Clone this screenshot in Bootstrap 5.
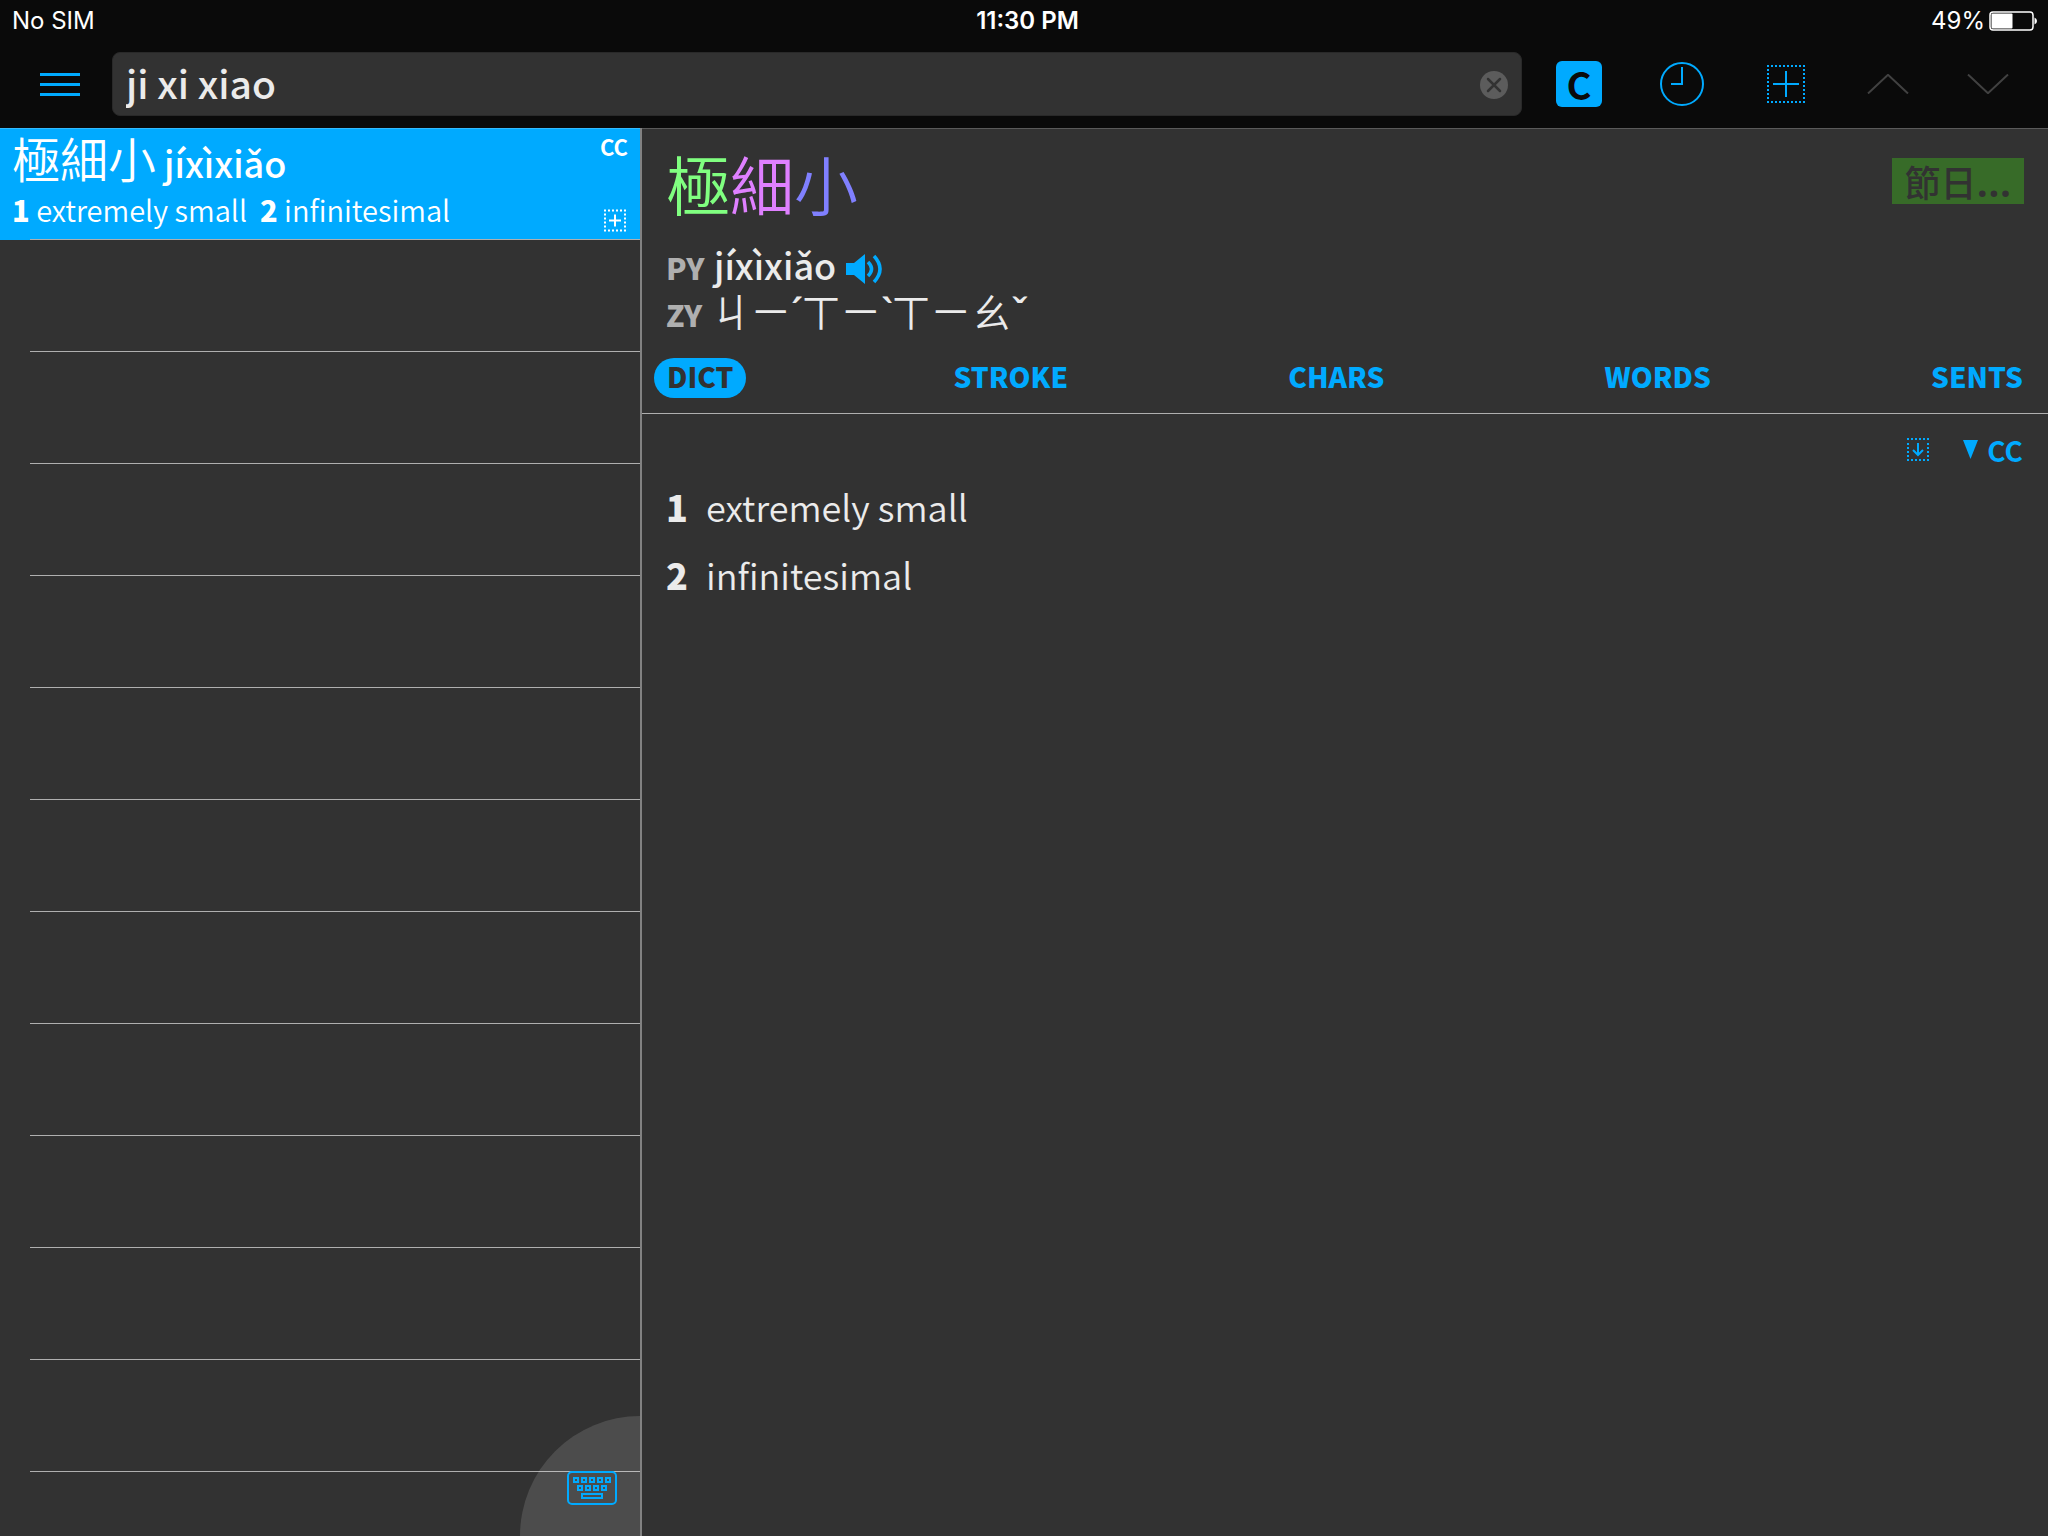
<!DOCTYPE html>
<html lang="zh-Hant">
<head>
<meta charset="utf-8">
<meta name="viewport" content="width=device-width, initial-scale=1">
<title>Dictionary</title>
<link href="https://cdn.jsdelivr.net/npm/bootstrap@5.3.0/dist/css/bootstrap.min.css" rel="stylesheet">
<style>
:root { --accent: #00aaff; --panel: #323232; --bar: #0a0a0a; --rule: #afafaf; --ink: #ebebeb; }
body { background: var(--panel); color: var(--ink); font-family: "Noto Sans CJK TC", "Noto Sans", sans-serif; }
svg { display: block; flex: none; }
button { background: none; border: 0; padding: 0; color: var(--accent); }
.topbar { background: var(--bar); }
.statusbar { height: 40px; padding: 0 11px 0 12px; color: #fff; font: 400 24px/42px Inter, sans-serif; }
.statusbar .clock { font-weight: 600; padding-left: 6px; }
.toolbar { height: 88px; padding: 0 38px 0 40px; }
.search { height: 64px; margin: 0 34px 0 32px; }
.search .form-control { height: 64px; padding: 0 64px 4px 13px; background: var(--panel); border: 1px solid #292929; border-radius: 8px; color: var(--ink); font-size: 39px; font-weight: 500; line-height: 58px; }
.clear-btn { right: 14px; top: 19px; }
.tools { gap: 56px; }
.c-btn { width: 46px; height: 46px; border-radius: 6px; background: var(--accent); color: var(--bar); font-size: 38px; line-height: 40px; font-weight: 700; }
.work { min-height: 0; }
.results { width: 642px; border-right: 2px solid #828282; }
.result { height: 112px; padding: 0; background: none; border: 0; color: inherit; }
.result::after { content: ""; position: absolute; left: 30px; right: 0; bottom: 0; border-bottom: 1px solid var(--rule); }
.result.picked { background: var(--accent); color: #fff; padding: 1px 12px 0; box-shadow: inset 0 1px #33bbff; }
.head-line { height: 56px; font-size: 48px; line-height: 56px; font-weight: 350; }
.head-line span { font-size: 36px; line-height: 1; font-weight: 500; }
.def-line { height: 48px; font-size: 29px; line-height: 48px; font-weight: 350; }
.def-line b, .senses b { font-weight: 900; }
.src { font-size: 22px; line-height: 34px; font-weight: 700; }
.kbd-btn { right: 0; bottom: 0; width: 120px; height: 120px; border-radius: 120px 0 0 0; background: rgba(255,255,255,.13); padding: 0 23px 31px 0; }
.entry { border-top: 1px solid #5a5a5a; }
.headword { font-size: 64px; line-height: 80px; padding-top: 13px; font-weight: 350; }
.t2 { color: #80ff80; } .t4 { color: #df80ff; } .t3 { color: #8080ff; }
.tag { width: 132px; height: 46px; margin-top: 29px; background: #376b28; color: var(--panel); font-size: 36px; line-height: 42px; font-weight: 500; }
.tag span, .zhuyin i { font-family: "Noto Sans", sans-serif; }
.tag span { font-size: 42px; line-height: 1; font-weight: 600; }
.readings { padding-top: 18px; }
.reading { height: 49px; line-height: 48px; font-size: 36px; font-weight: 500; }
.reading + .reading { height: 50px; line-height: 50px; }
.reading .kind { width: 45px; color: #afafaf; font-size: 30px; font-weight: 900; }
.pinyin { padding-left: 3px; }
.zhuyin { font-size: 40px; font-weight: 350; line-height: 1; }
.zhuyin i { display: inline-block; width: 10px; font-style: normal; font-weight: 500; }
.tabs { padding: 19px 12px 15px; border-bottom: 1px solid var(--rule); }
.tabs .nav-link { padding: 0 13px; height: 40px; border-radius: 20px; font-size: 28px; line-height: 37px; font-weight: 800; color: var(--accent); }
.tabs .nav-link.active { background: var(--accent); color: var(--panel); }
.pick { height: 58px; padding: 13px 25px 0 0; }
.pick button { font-size: 28px; font-weight: 700; line-height: 40px; }
.senses { padding: 0 24px; font-size: 36px; line-height: 68px; font-weight: 350; }
.senses b { width: 40px; }
</style>
<script src="https://cdn.jsdelivr.net/npm/bootstrap@5.3.0/dist/js/bootstrap.bundle.min.js"></script>
</head>
<body class="vh-100 overflow-hidden d-flex flex-column">
<header class="topbar">
  <div class="statusbar row g-0">
    <div class="col">No SIM</div>
    <div class="col text-center clock">11:30 PM</div>
    <div class="col d-flex justify-content-end align-items-center gap-1">49%
      <svg width="48" height="20" viewBox="0 0 48 20"><rect x="1" y="1" width="43" height="18" rx="3" fill="none" stroke="#fff" stroke-width="1.5"/><rect x="2.500" y="2.500" width="21" height="15" rx="1" fill="#fff"/><path d="M45.500 6.500q2.500 1 2.500 3.500t-2.500 3.500z" fill="#fff"/></svg>
    </div>
  </div>
  <div class="toolbar d-flex align-items-center">
    <button type="button" aria-label="Menu"><svg width="40" height="24" viewBox="0 0 40 24"><path d="M0 2.500h40M0 12.500h40M0 22.500h40" stroke="#00aaff" stroke-width="3"/></svg></button>
    <div class="search position-relative flex-grow-1">
      <input class="form-control" type="text" aria-label="Search" value="ji xi xiao">
      <button type="button" class="clear-btn position-absolute" aria-label="Clear"><svg width="28" height="28" viewBox="0 0 28 28"><circle cx="14" cy="14" r="14" fill="#5c5c5c"/><path d="M8 8l12 12M20 8L8 20" stroke="#323232" stroke-width="2.500" stroke-linecap="round"/></svg></button>
    </div>
    <div class="d-flex align-items-center tools">
      <button type="button" class="c-btn">C</button>
      <button type="button" aria-label="History"><svg width="48" height="46" viewBox="0 0 48 46"><circle cx="24" cy="23" r="21" fill="none" stroke="#00aaff" stroke-width="2"/><path d="M24 6v17H13" fill="none" stroke="#00aaff" stroke-width="2"/></svg></button>
      <button type="button" aria-label="Add"><svg width="48" height="38" viewBox="0 0 48 38"><path d="M5 1h38M5 37h38M6 4v30M42 4v30" fill="none" stroke="#00aaff" stroke-width="2" stroke-dasharray="2 2"/><path d="M24 6v26M11 19h26" stroke="#00aaff" stroke-width="2"/></svg></button>
      <button type="button" aria-label="Previous"><svg width="44" height="20" viewBox="0 0 44 20"><path d="M2 19.500L22 .8l20 18.700" fill="none" stroke="#414141" stroke-width="2"/></svg></button>
      <button type="button" aria-label="Next"><svg width="44" height="20" viewBox="0 0 44 20"><path d="M2 .5l20 18.700L42 .5" fill="none" stroke="#414141" stroke-width="2"/></svg></button>
    </div>
  </div>
</header>
<main class="work d-flex flex-grow-1">
  <aside class="results position-relative flex-shrink-0">
    <ul class="list-group list-group-flush rounded-0">
      <li class="list-group-item result picked d-flex justify-content-between">
        <div>
          <div class="head-line">極細小<span> jíxìxiǎo</span></div>
          <div class="def-line"><b>1</b> extremely small&nbsp; <b>2</b> infinitesimal</div>
        </div>
        <div class="d-flex flex-column justify-content-between align-items-end pb-2">
          <span class="src">CC</span>
          <svg width="24" height="23" viewBox="0 0 24 23"><path d="M0 1.500h22M0 21.500h22M1 4.500v15M21 4.500v15" stroke="#fff" stroke-width="2" stroke-dasharray="2 2" fill="none"/><path d="M11 5.500v12M5 11.500h12" stroke="#fff" stroke-width="2"/></svg>
        </div>
      </li>
      <li class="list-group-item result"></li><li class="list-group-item result"></li><li class="list-group-item result"></li>
      <li class="list-group-item result"></li><li class="list-group-item result"></li><li class="list-group-item result"></li>
      <li class="list-group-item result"></li><li class="list-group-item result"></li><li class="list-group-item result"></li>
      <li class="list-group-item result"></li><li class="list-group-item result"></li><li class="list-group-item result"></li>
    </ul>
    <button type="button" class="kbd-btn position-absolute d-flex justify-content-end align-items-end" aria-label="Keyboard">
      <svg width="50" height="34" viewBox="0 0 50 34" fill="none" stroke="#00aaff" stroke-width="2"><rect x="1" y="1" width="48" height="32" rx="4"/><path d="M7 7h4v4H7zM15 7h4v4h-4zM23 7h4v4h-4zM31 7h4v4h-4zM39 7h4v4h-4zM11 15h4v4h-4zM19 15h4v4h-4zM27 15h4v4h-4zM35 15h4v4h-4zM15 23h20v4H15z"/></svg>
    </button>
  </aside>
  <section class="entry flex-grow-1">
    <div class="d-flex justify-content-between align-items-start ps-4 pe-4">
      <div class="headword"><span class="t2">極</span><span class="t4">細</span><span class="t3">小</span></div>
      <button type="button" class="tag">節日<span>…</span></button>
    </div>
    <div class="readings ps-4">
      <div class="reading d-flex align-items-baseline"><span class="kind">PY</span><span class="pinyin">jíxìxiǎo</span>
        <button type="button" class="ms-2 pb-1 align-self-end" aria-label="Play"><svg width="38" height="31" viewBox="0 0 38 31"><path d="M2 9h8L21 0v30L10 21H2z" fill="#00aaff"/><path d="M24 8q7 7 0 14M30 2q12 13 0 26" fill="none" stroke="#00aaff" stroke-width="3.500"/></svg></button>
      </div>
      <div class="reading d-flex align-items-baseline"><span class="kind">ZY</span><span class="zhuyin">ㄐㄧ<i>ˊ</i>ㄒㄧ<i>ˋ</i>ㄒㄧㄠ<i>ˇ</i></span></div>
    </div>
    <ul class="nav tabs justify-content-between">
      <li class="nav-item"><a class="nav-link active" href="#">DICT</a></li>
      <li class="nav-item"><a class="nav-link" href="#">STROKE</a></li>
      <li class="nav-item"><a class="nav-link" href="#">CHARS</a></li>
      <li class="nav-item"><a class="nav-link" href="#">WORDS</a></li>
      <li class="nav-item"><a class="nav-link" href="#">SENTS</a></li>
    </ul>
    <div class="pick d-flex justify-content-end align-items-center">
      <button type="button" aria-label="Expand"><svg width="24" height="23" viewBox="0 0 24 23"><path d="M1 1h22M1 22h22M2 5v15M22 5v15" stroke="#00aaff" stroke-width="2" stroke-dasharray="2 2" fill="none"/><path d="M12 5v12M7 12l5 5 5-5" fill="none" stroke="#00aaff" stroke-width="2"/></svg></button>
      <button type="button" class="d-flex align-items-center ms-4"><svg width="33" height="26" viewBox="0 0 33 26"><path d="M9 3h15l-7.500 19z" fill="#00aaff"/></svg>CC</button>
    </div>
    <div class="senses">
      <div class="d-flex"><b>1</b><span>extremely small</span></div>
      <div class="d-flex"><b>2</b><span>infinitesimal</span></div>
    </div>
  </section>
</main>
</body>
</html>
